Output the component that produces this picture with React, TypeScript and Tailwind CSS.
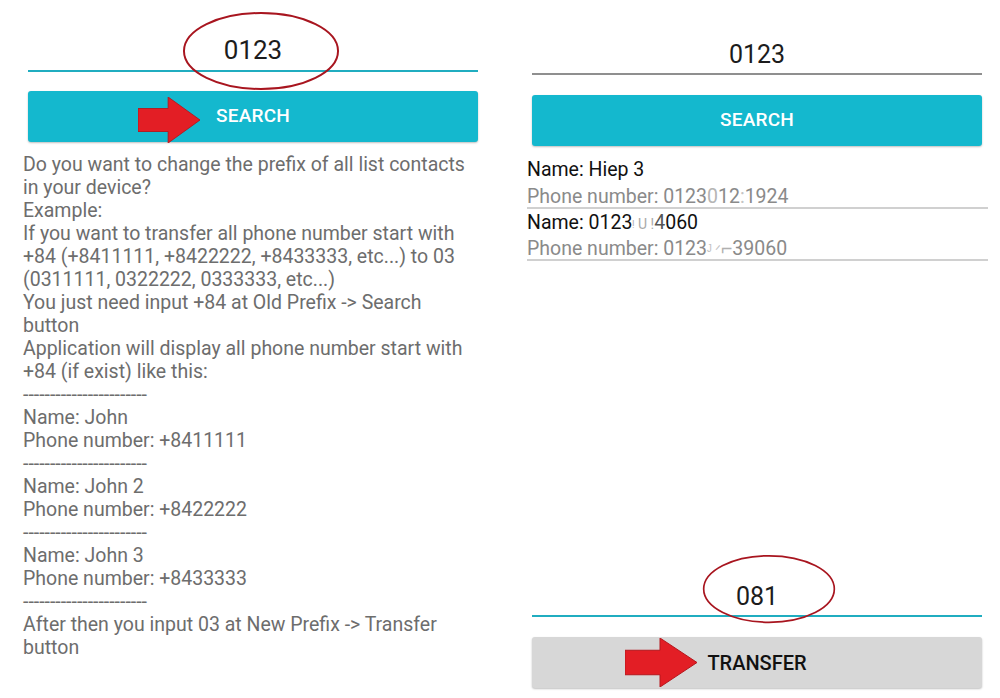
import React from "react"

const dashes = "-----------------------"

const helpLines = [
  "Do you want to change the prefix of all list contacts",
  "in your device?",
  "Example:",
  "If you want to transfer all phone number start with",
  "+84 (+8411111, +8422222, +8433333, etc...) to 03",
  "(0311111, 0322222, 0333333, etc...)",
  "You just need input +84 at Old Prefix -> Search",
  "button",
  "Application will display all phone number start with",
  "+84 (if exist) like this:",
  dashes,
  "Name: John",
  "Phone number: +8411111",
  dashes,
  "Name: John 2",
  "Phone number: +8422222",
  dashes,
  "Name: John 3",
  "Phone number: +8433333",
  dashes,
  "After then you input 03 at New Prefix -> Transfer",
  "button",
]

function RedArrow({ className }: { className: string }) {
  return (
    <svg className={className} viewBox="0 0 72 50" preserveAspectRatio="none">
      <polygon
        points="0,12.5 35,12.5 35,0 72,25 35,50 35,37.5 0,37.5"
        fill="#e31e25"
        stroke="#b4161c"
        strokeWidth="1"
      />
    </svg>
  )
}

function Circle({ className }: { className: string }) {
  return (
    <svg className={className} viewBox="0 0 160 80" preserveAspectRatio="none">
      <ellipse cx="80" cy="40" rx="78" ry="38" fill="none" stroke="#a8151f" strokeWidth="2" />
    </svg>
  )
}

function PrefixInput({ value, className }: { value: string; className: string }) {
  return <div className={`border-b-2 text-center text-[#1c1c1c] ${className}`}>{value}</div>
}

export default function App() {
  return (
    <div
      className="relative flex h-[698px] w-[1000px] overflow-hidden bg-white"
      style={{ fontFamily: "Roboto, 'Liberation Sans', sans-serif" }}
    >
      {/* left: instructions */}
      <div className="flex w-[506px] flex-col">
        <div className="mx-[28px] pt-[30px]">
          <PrefixInput value="0123" className="border-[#20adc0] text-[26px] leading-[40px]" />
        </div>
        <div className="relative mx-[28px] mt-[19px] flex h-[51px] items-center justify-center rounded-[3px] bg-[#14b8ce] shadow-[0_1px_2px_rgba(0,0,0,0.25)]">
          <span className="text-[19px] font-medium tracking-[0.2px] text-white">SEARCH</span>
          <RedArrow className="absolute left-[110px] top-[6px] h-[46px] w-[62px]" />
        </div>
        <div className="mt-[11px] pl-[23px] text-[19.5px] leading-[23px] text-[#6d6d6d]">
          {helpLines.map((line, i) => (
            <div key={i} className="h-[23px] whitespace-nowrap">
              {line}
            </div>
          ))}
        </div>
      </div>

      {/* right: results */}
      <div className="flex flex-1 flex-col">
        <div className="ml-[26px] w-[450px] pt-[37px]">
          <PrefixInput value="0123" className="border-[#8f8f8f] text-[25px] leading-[36px]" />
        </div>
        <div className="ml-[26px] mt-[20px] flex h-[51px] w-[450px] items-center justify-center rounded-[3px] bg-[#14b8ce] shadow-[0_1px_2px_rgba(0,0,0,0.25)]">
          <span className="text-[19px] font-medium tracking-[0.2px] text-white">SEARCH</span>
        </div>

        <div className="mt-[12px] ml-[21px] w-[461px] text-[19.5px]">
          <div className="border-b-2 border-[#d0d0d0]">
            <div className="h-[24px] overflow-hidden leading-[24px] text-[#111]">Name: Hiep 3</div>
            <div className="h-[25px] overflow-hidden leading-[30px] text-[#8a8a8a]">
              Phone number: 0123<span className="text-[#b5b5b5]">0</span>12<span className="text-[#c4c4c4]">:</span>1924
            </div>
          </div>
          <div className="border-b-2 border-[#d0d0d0]">
            <div className="h-[25px] overflow-hidden leading-[28px] text-[#111]">
              Name: 0123<span className="text-[14px] text-[#aaa]">ᵎ U !</span>
              <span className="text-[#555]">4</span>060
            </div>
            <div className="h-[25px] overflow-hidden leading-[30px] text-[#8a8a8a]">
              Phone number: 0123<span className="text-[14px] text-[#c2c2c2]">ᴶ ᐟ</span>
              <span className="text-[#b0b0b0]">⌐</span>39060
            </div>
          </div>
        </div>

        <div className="mt-auto">
          <div className="ml-[26px] w-[450px]">
            <PrefixInput value="081" className="border-[#20adc0] text-[25px] leading-[36px]" />
          </div>
          <div className="relative ml-[26px] mt-[20px] mb-[10px] flex h-[51px] w-[450px] items-center justify-center rounded-[3px] bg-[#d7d7d7] shadow-[0_1px_2px_rgba(0,0,0,0.25)]">
            <span className="text-[20px] font-medium text-[#111]">TRANSFER</span>
            <RedArrow className="absolute left-[93px] top-[1px] h-[49px] w-[72px]" />
          </div>
        </div>
      </div>

      {/* annotation circles */}
      <Circle className="absolute left-[182px] top-[11px] h-[80px] w-[158px]" />
      <Circle className="absolute left-[702px] top-[554px] h-[70px] w-[134px]" />
    </div>
  )
}
